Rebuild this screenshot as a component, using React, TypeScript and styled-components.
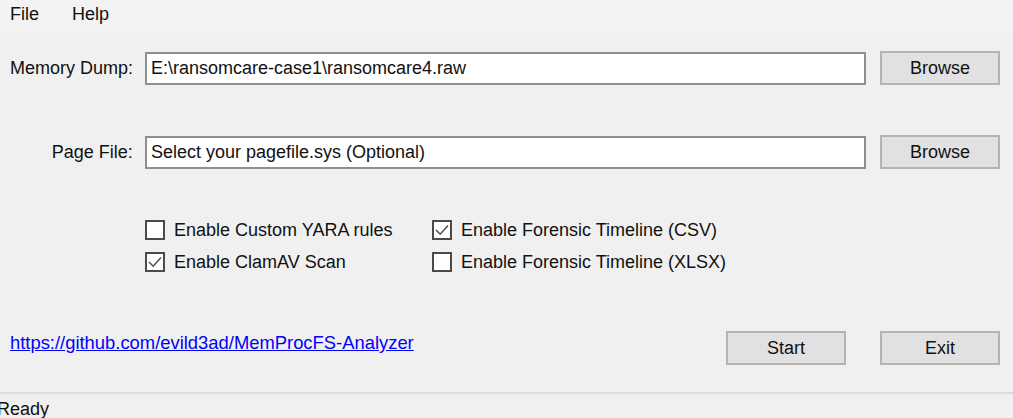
import React from "react";
import styled, { createGlobalStyle } from "styled-components";

const Global = createGlobalStyle`
  html, body { margin: 0; padding: 0; background: #f0f0f0; overflow: hidden; }
  body { font-family: "Liberation Sans", Arial, sans-serif; color: #000; }
  * { box-sizing: border-box; }
`;

const Window = styled.div`
  width: 1013px;
  height: 418px;
  display: flex;
  flex-direction: column;
  background: #f0f0f0;
  font-size: 18px;
  color: #111;
`;

const MenuBar = styled.div`
  height: 33px;
  flex-shrink: 0;
  display: flex;
  align-items: center;
  background: #f3f3f3;
  padding: 0 0 4px 2px;
`;

const MenuItem = styled.span`
  padding: 0 8px;
  margin-right: 17px;
`;

const Body = styled.div`
  flex: 1;
  display: flex;
  flex-direction: column;
  padding: 18px 13px 0 10px;
`;

const FieldRow = styled.div<{ $mt?: number }>`
  display: flex;
  align-items: center;
  margin-top: ${(p) => p.$mt ?? 0}px;
  height: 34px;
`;

const Label = styled.label`
  width: 123px;
  text-align: right;
  margin-right: 12px;
  white-space: nowrap;
`;

const TextBox = styled.div`
  width: 722px;
  height: 33px;
  border: 2px solid #8f8f8f;
  background: #fff;
  display: flex;
  align-items: center;
  padding-left: 4px;
  margin-right: 14px;
  white-space: nowrap;
`;

const Button = styled.div<{ $ml?: number }>`
  width: 120px;
  height: 34px;
  border: 2px solid #b3b3b3;
  background: #e1e1e1;
  display: flex;
  align-items: center;
  justify-content: center;
  margin-left: ${(p) => p.$ml ?? 0}px;
`;

const Options = styled.div`
  display: grid;
  grid-template-columns: 287px auto;
  row-gap: 12px;
  margin: 51px 0 0 135px;
`;

const Option = styled.div`
  display: flex;
  align-items: center;
  height: 20px;
  white-space: nowrap;
`;

const Box = styled.span`
  width: 20px;
  height: 20px;
  border: 2px solid #4a4a4a;
  background: #fff;
  margin-right: 9px;
  display: flex;
  align-items: center;
  justify-content: center;
`;

const BottomRow = styled.div`
  display: flex;
  align-items: center;
  margin-top: 59px;
  height: 34px;
`;

const Link = styled.a`
  color: #0000ff;
  text-decoration: underline;
  font-size: 18.4px;
  margin-right: auto;
  margin-top: -10px;
`;

const StatusBar = styled.div`
  height: 26px;
  flex-shrink: 0;
  border-top: 2px solid #dcdcdc;
  display: flex;
  align-items: flex-start;
  padding-top: 5px;
  overflow: hidden;
`;

const StatusText = styled.span`
  margin-left: -3px;
`;

const Check = () => (
  <svg width="16" height="16" viewBox="0 0 16 16">
    <path d="M2 8 L6.2 12.2 L14 3.5" fill="none" stroke="#555" strokeWidth="1.6" />
  </svg>
);

const CheckItem = ({ checked, label }: { checked?: boolean; label: string }) => (
  <Option>
    <Box>{checked && <Check />}</Box>
    {label}
  </Option>
);

export default function App() {
  return (
    <>
      <Global />
      <Window>
        <MenuBar>
          <MenuItem>File</MenuItem>
          <MenuItem>Help</MenuItem>
        </MenuBar>
        <Body>
          <FieldRow>
            <Label>Memory Dump:</Label>
            <TextBox>E:\ransomcare-case1\ransomcare4.raw</TextBox>
            <Button>Browse</Button>
          </FieldRow>
          <FieldRow $mt={50}>
            <Label>Page File:</Label>
            <TextBox>Select your pagefile.sys (Optional)</TextBox>
            <Button>Browse</Button>
          </FieldRow>
          <Options>
            <CheckItem label="Enable Custom YARA rules" />
            <CheckItem checked label="Enable Forensic Timeline (CSV)" />
            <CheckItem checked label="Enable ClamAV Scan" />
            <CheckItem label="Enable Forensic Timeline (XLSX)" />
          </Options>
          <BottomRow>
            <Link href="#">https://github.com/evild3ad/MemProcFS-Analyzer</Link>
            <Button>Start</Button>
            <Button $ml={34}>Exit</Button>
          </BottomRow>
        </Body>
        <StatusBar>
          <StatusText>Ready</StatusText>
        </StatusBar>
      </Window>
    </>
  );
}
